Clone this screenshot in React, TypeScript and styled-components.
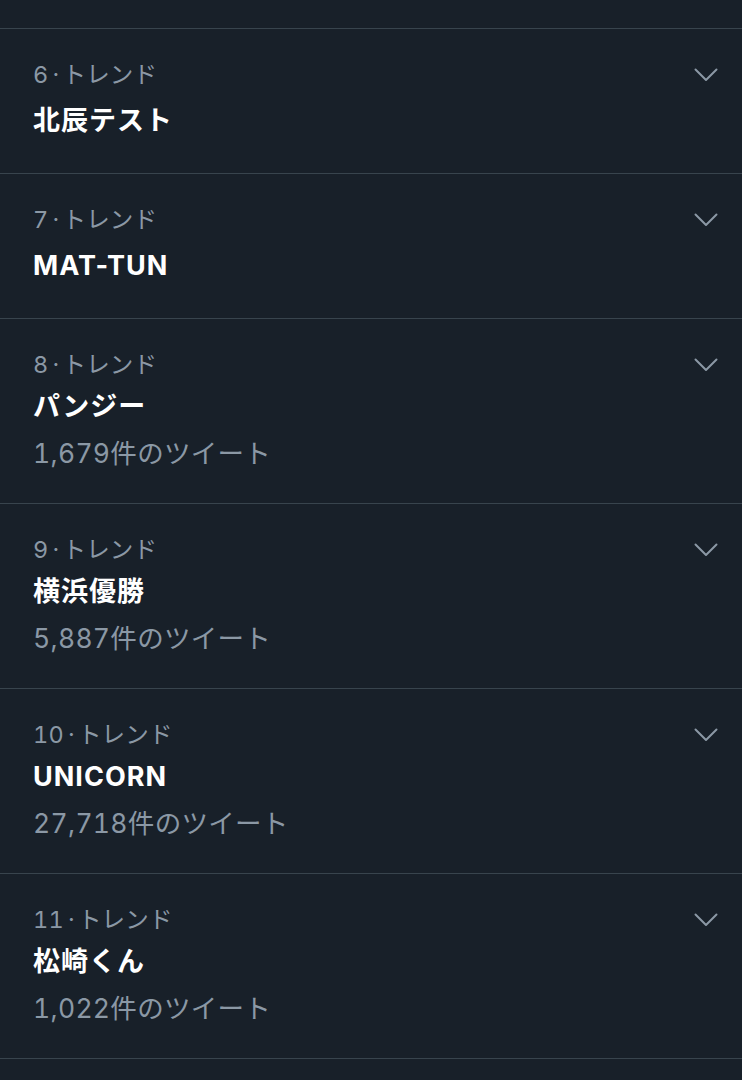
import styled, { createGlobalStyle } from "styled-components";

const GlobalStyle = createGlobalStyle`
    html, body {
        margin: 0;
        padding: 0;
        background-color: #182029;
    }
    body {
        font-family: Inter, "Noto Sans CJK JP", sans-serif;
        -webkit-font-smoothing: antialiased;
    }
`

const Page = styled.div`
    width: 742px;
    height: 1080px;
    overflow: hidden;
    background-color: #182029;
`
const TopSpacer = styled.div`
    height: 28px;
    border-bottom: 1px solid #38444d;
`
const Row = styled.div<{ $hasCount: boolean }>`
    display: flex;
    align-items: flex-start;
    padding: 26px 24px ${(p) => (p.$hasCount ? "26px" : "30px")} 33px;
    border-bottom: 1px solid #38444d;
`
const Body = styled.div`
    flex: 1;
    display: flex;
    flex-direction: column;
`
const Meta = styled.div`
    height: 40px;
    line-height: 40px;
    font-size: 23.5px;
    font-weight: 400;
    letter-spacing: 0.2px;
    color: #8b98a5;
    font-variant-numeric: tabular-nums;
`
const Dot = styled.span`
    margin: 0 3px 0 4px;
`
const Title = styled.div<{ $hasCount: boolean }>`
    height: 44px;
    line-height: 44px;
    margin-top: ${(p) => (p.$hasCount ? "0" : "4px")};
    font-size: 27px;
    font-weight: 700;
    letter-spacing: 1px;
    color: #ffffff;
`
const Count = styled.div`
    height: 48px;
    line-height: 48px;
    font-size: 26.5px;
    letter-spacing: 0.3px;
    color: #8b98a5;
    font-variant-numeric: tabular-nums;
`
const Chevron = styled.div`
    height: 40px;
    width: 24px;
    display: flex;
    align-items: center;
    justify-content: center;
    color: #8b98a5;
`

type Trend = { rank: number; name: string; count?: string };

const trends: Trend[] = [
    { rank: 6, name: "北辰テスト" },
    { rank: 7, name: "MAT-TUN" },
    { rank: 8, name: "パンジー", count: "1,679" },
    { rank: 9, name: "横浜優勝", count: "5,887" },
    { rank: 10, name: "UNICORN", count: "27,718" },
    { rank: 11, name: "松崎くん", count: "1,022" },
];

function ChevronIcon() {
    return (
        <svg width="24" height="14" viewBox="0 0 24 14" fill="none">
            <path d="M1.5 1.5 L12 12 L22.5 1.5" stroke="currentColor" strokeWidth="2" strokeLinecap="round" strokeLinejoin="round" />
        </svg>
    )
}

export default function App() {
    return (
        <Page>
            <GlobalStyle />
            <TopSpacer />
            {trends.map((t) => {
                const hasCount = !!t.count;
                return (
                    <Row key={t.rank} $hasCount={hasCount}>
                        <Body>
                            <Meta>
                                {t.rank}<Dot>·</Dot>トレンド
                            </Meta>
                            <Title $hasCount={hasCount}>{t.name}</Title>
                            {t.count && <Count>{t.count}件のツイート</Count>}
                        </Body>
                        <Chevron>
                            <ChevronIcon />
                        </Chevron>
                    </Row>
                )
            })}
        </Page>
    )
}
